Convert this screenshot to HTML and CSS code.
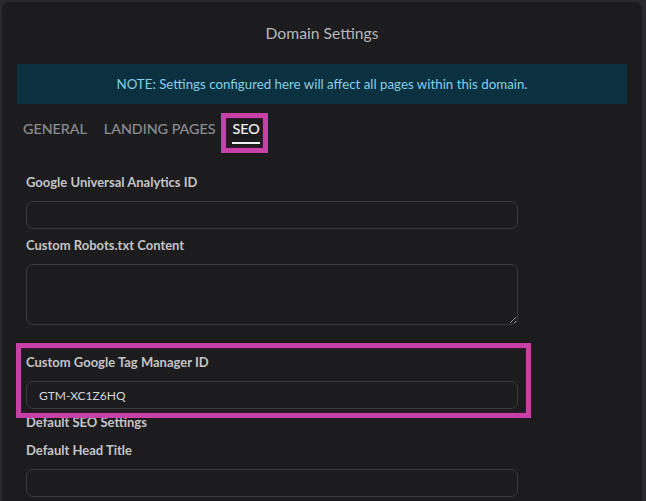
FILE: index.html
```html
<!DOCTYPE html>
<html lang="en">
<head>
<meta charset="utf-8">
<title>Domain Settings</title>
<link rel="stylesheet" href="styles.css">
</head>
<body>
<div class="panel">
  <h1 class="title">Domain Settings</h1>
  <div class="note">NOTE: Settings configured here will affect all pages within this domain.</div>
  <nav class="tabs">
    <span class="tab">GENERAL</span>
    <span class="tab">LANDING PAGES</span>
    <span class="tab tab-active">SEO</span>
  </nav>
  <form class="form">
    <div class="field">
      <label class="label">Google Universal Analytics ID</label>
      <input class="input" type="text">
    </div>
    <div class="field field-wide">
      <label class="label">Custom Robots.txt Content</label>
      <textarea class="input textarea"></textarea>
    </div>
    <div class="field field-tight">
      <label class="label">Custom Google Tag Manager ID</label>
      <input class="input" type="text" value="GTM-XC1Z6HQ">
    </div>
    <div class="section-title">Default SEO Settings</div>
    <div class="field">
      <label class="label">Default Head Title</label>
      <input class="input" type="text">
    </div>
  </form>
  <div class="annot annot-seo"></div>
  <div class="annot annot-gtm"></div>
</div>
</body>
</html>
```
FILE: styles.css
```css
* { box-sizing: border-box; }
html, body {
  margin: 0;
  padding: 0;
  height: 100%;
  background: #2a2a2d;
  overflow: hidden;
}
body {
  font-family: Lato, "Open Sans", "Liberation Sans", sans-serif;
}
.panel {
  position: relative;
  margin: 2px 4px 0 2px;
  height: 520px;
  background: #1c1c1e;
  border-radius: 7px 7px 0 0;
  padding-top: 21px;
}
.title {
  margin: 0;
  font-size: 15.7px;
  line-height: 20px;
  font-weight: 400;
  color: #b6b6b9;
  text-align: center;
}
.note {
  margin: 21px 15px 0 15px;
  height: 40px;
  line-height: 40px;
  background: #0b3141;
  color: #86cfe6;
  font-size: 13.3px;
  text-align: center;
}
.tabs {
  display: flex;
  gap: 17px;
  padding-left: 21px;
  margin-top: 15px;
}
.tab {
  font-size: 14.3px;
  line-height: 20px;
  color: #8d8d91;
  padding-bottom: 3px;
  border-bottom: 2px solid transparent;
  -webkit-text-stroke: 0.2px currentColor;
}
.tab-active {
  color: #f2f2f2;
  border-bottom-color: #f2f2f2;
}
.form {
  padding-left: 24px;
  margin-top: 28px;
  width: 540px;
}
.field {
  display: flex;
  flex-direction: column;
  margin-bottom: 6px;
}
.field-wide { margin-bottom: 27px; }
.field-tight { margin-bottom: 3px; }
.label, .section-title {
  font-size: 13px;
  line-height: 20px;
  font-weight: 700;
  color: #c4c4c7;
}
.label { margin-bottom: 9px; }
.section-title { margin-bottom: 8px; }
.input {
  display: block;
  width: 492px;
  height: 28px;
  background: #1c1c1e;
  border: 1px solid #3b3b3e;
  border-radius: 7px;
  padding: 0 12px;
  font-family: Lato, "Open Sans", "Liberation Sans", sans-serif;
  font-size: 12px;
  color: #d6d6d8;
  outline: none;
}
.textarea {
  height: 61px;
  resize: vertical;
  padding: 6px 12px;
}
.annot {
  position: absolute;
  border: 5px solid #c640a6;
  box-shadow: inset 0 0 0 1px #3a1433;
  pointer-events: none;
}
.annot-seo {
  left: 219px;
  top: 111px;
  width: 47px;
  height: 40px;
}
.annot-gtm {
  left: 14px;
  top: 341px;
  width: 515px;
  height: 75px;
}
```
